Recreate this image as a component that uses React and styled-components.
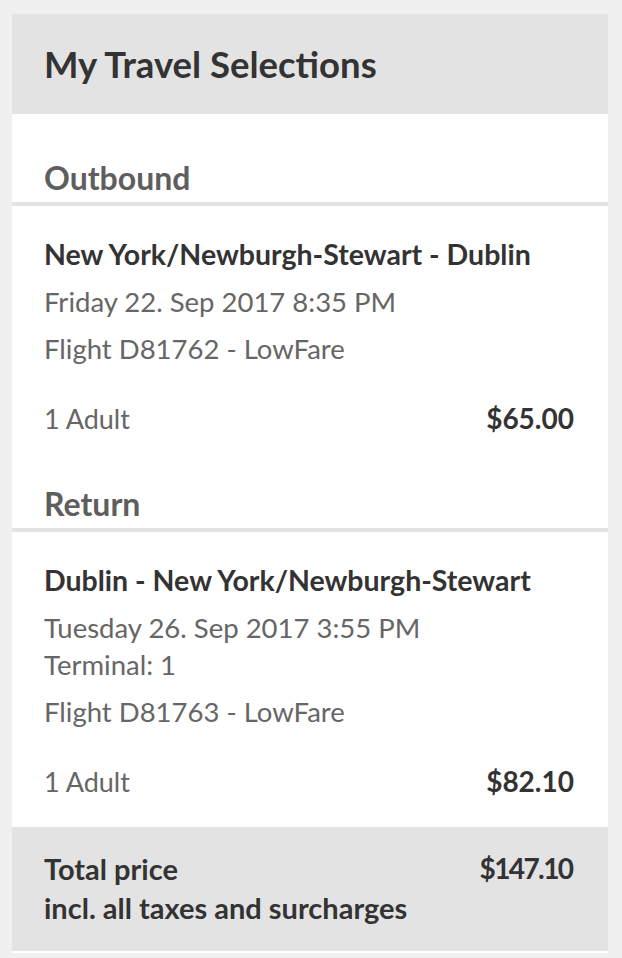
import styled, { createGlobalStyle } from 'styled-components';

const GlobalStyle = createGlobalStyle`
  body {
    margin: 0;
    background-color: #f0f0f0;
    font-family: Lato, "Liberation Sans", sans-serif;
  }
`;

const Card = styled.div`
  width: 596px;
  margin: 14px 0 0 12px;
  background-color: #fff;
  border-bottom: 2px solid #fff;
`;

const Header = styled.div`
  height: 100px;
  display: flex;
  align-items: center;
  padding: 0 32px;
  background-color: #e3e3e3;
`;

const Title = styled.h1`
  margin: 0;
  font-size: 36.5px;
  font-weight: 700;
  color: #333;
`;

const Body = styled.div`
  padding-top: 24px;
`;

const SectionHeading = styled.h2`
  margin: 0;
  padding: 21px 32px 6px;
  font-size: 32px;
  line-height: 37px;
  font-weight: 700;
  color: #5e5e5e;
  border-bottom: 4px solid #e3e3e3;
`;

const Segment = styled.div`
  padding: 30px 34px 27px 32px;
`;

const Block = styled.div`
  font-size: ${(p) => (p.strong ? '28.5px' : '27.5px')};
  line-height: 37px;
  color: ${(p) => (p.strong ? '#333' : '#666')};
  font-weight: ${(p) => (p.strong ? 700 : 400)};
  & + & {
    margin-top: 10px;
  }
`;

const PriceRow = styled.div`
  display: flex;
  justify-content: space-between;
  margin-top: 33px;
  font-size: 27px;
  line-height: 37px;
  color: #666;
`;

const Price = styled.span`
  font-size: 28px;
  font-weight: 700;
  color: #333;
`;

const Total = styled.div`
  display: flex;
  justify-content: space-between;
  align-items: flex-start;
  padding: 22px 34px 24px 32px;
  background-color: #e3e3e3;
  font-size: 29px;
  line-height: 39px;
  font-weight: 700;
  color: #333;
`;

const TotalPrice = styled.span`
  font-size: 28px;
  letter-spacing: -1.6px;
  margin-right: 1.6px;
`;

const segments = [
  {
    label: 'Outbound',
    route: 'New York/Newburgh-Stewart - Dublin',
    date: ['Friday 22. Sep 2017 8:35 PM'],
    flight: 'Flight D81762 - LowFare',
    price: '$65.00',
  },
  {
    label: 'Return',
    route: 'Dublin - New York/Newburgh-Stewart',
    date: ['Tuesday 26. Sep 2017 3:55 PM', 'Terminal: 1'],
    flight: 'Flight D81763 - LowFare',
    price: '$82.10',
  },
];

export default function App() {
  return (
    <>
      <GlobalStyle />
      <Card>
        <Header>
          <Title>My Travel Selections</Title>
        </Header>
        <Body>
          {segments.map((s) => (
            <div key={s.label}>
              <SectionHeading>{s.label}</SectionHeading>
              <Segment>
                <Block strong>{s.route}</Block>
                <Block>
                  {s.date.map((d) => (
                    <div key={d}>{d}</div>
                  ))}
                </Block>
                <Block>{s.flight}</Block>
                <PriceRow>
                  <span>1 Adult</span>
                  <Price>{s.price}</Price>
                </PriceRow>
              </Segment>
            </div>
          ))}
          <Total>
            <div>
              Total price
              <br />
              incl. all taxes and surcharges
            </div>
            <TotalPrice>$147.10</TotalPrice>
          </Total>
        </Body>
      </Card>
    </>
  );
}
